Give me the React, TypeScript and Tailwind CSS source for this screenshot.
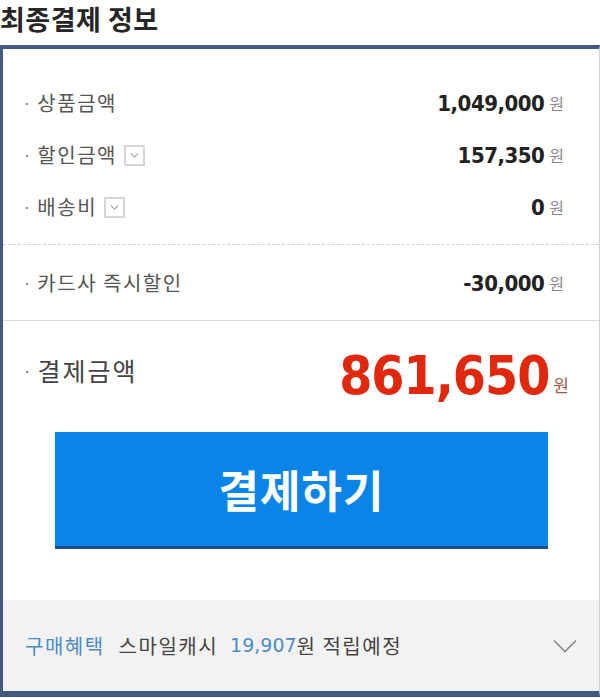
import { ChevronDown } from 'lucide-react'

const kr = "font-['Noto_Sans_CJK_KR','Noto_Sans',sans-serif]"
const num = "font-['DejaVu_Sans_Condensed','DejaVu_Sans','Noto_Sans_CJK_KR',sans-serif]"
const numWide = "font-['DejaVu_Sans','Noto_Sans_CJK_KR',sans-serif]"

type Row = { label: string; value: string; toggle?: boolean }

const topRows: Row[] = [
  { label: '상품금액', value: '1,049,000' },
  { label: '할인금액', value: '157,350', toggle: true },
  { label: '배송비', value: '0', toggle: true },
]

function ToggleBox() {
  return (
    <span className="ml-[7px] inline-flex h-[21px] w-[21px] items-center justify-center border-2 border-[#d6d6d6] bg-white">
      <ChevronDown className="h-[13px] w-[13px] text-[#a9a9a9]" strokeWidth={2.5} />
    </span>
  )
}

function PriceRow({ row }: { row: Row }) {
  return (
    <div className="flex h-[52px] items-center justify-between">
      <div className={`flex items-center text-[20px] tracking-[1.5px] text-[#555] ${kr}`}>
        <span className="mr-[5px] text-[14px] text-[#666]">·</span>
        <span>{row.label}</span>
        {row.toggle && <ToggleBox />}
      </div>
      <div className="flex items-center">
        <span className={`text-[22px] font-bold tracking-[-0.5px] text-[#222] ${num}`}>{row.value}</span>
        <span className={`ml-[5px] text-[16px] text-[#888] ${kr}`}>원</span>
      </div>
    </div>
  )
}

export default function App() {
  return (
    <div className="h-[698px] w-[600px] overflow-hidden bg-white">
      <h2 className={`h-[45px] text-[27px] font-bold leading-[37px] tracking-[0.5px] text-[#262626] ${kr}`}>최종결제 정보</h2>

      <div className="border-t-4 border-b-[6px] border-l-[3px] border-r border-t-[#43597f] border-b-[#43597f] border-l-[#43597f] border-r-[#cfd4dc]">
        <div className="border-b border-dashed border-[#cfcfcf] pb-[11px] pl-[20px] pr-[35px] pt-[28px]">
          {topRows.map((r) => (
            <PriceRow key={r.label} row={r} />
          ))}
        </div>

        <div className="border-b border-[#dcdcdc] pb-[11px] pl-[20px] pr-[35px] pt-[12px]">
          <PriceRow row={{ label: '카드사 즉시할인', value: '-30,000' }} />
        </div>

        <div className="pb-[51px] pt-[24px]">
          <div className="flex items-start justify-between pl-[20px] pr-[30px]">
            <div className={`mt-[7px] flex items-center text-[25px] tracking-[2px] text-[#444] ${kr}`}>
              <span className="mr-[4px] text-[15px] text-[#666]">·</span>
              <span>결제금액</span>
            </div>
            <div className="flex items-end">
              <span className={`text-[53px] font-bold leading-[62px] tracking-[-1px] text-[#e0280f] ${num}`}>861,650</span>
              <span className={`mb-[10px] ml-[4px] text-[17px] text-[#a0584a] ${kr}`}>원</span>
            </div>
          </div>

          <button
            type="button"
            className={`ml-[52px] mt-[25px] flex h-[117px] w-[493px] items-center justify-center border-b-[3px] border-[#1b4f93] bg-[#0b84e8] text-[44px] font-bold tracking-[1px] text-white ${kr}`}
          >
            결제하기
          </button>
        </div>

        <div className={`flex h-[91px] items-center justify-between bg-[#f2f2f2] pl-[22px] pr-[22px] text-[20px] tracking-[1.5px] ${kr}`}>
          <div className="flex items-center">
            <span className="text-[#4a8cc4]">구매혜택</span>
            <span className="ml-[14px] text-[#444]">스마일캐시</span>
            <span className={`ml-[12px] text-[19px] tracking-normal text-[#4a8cc4] ${numWide}`}>19,907</span>
            <span className="text-[#444]">원 적립예정</span>
          </div>
          <svg width="24" height="14" viewBox="0 0 24 14" fill="none">
            <path d="M1 1.5 L12 12.5 L23 1.5" stroke="#8a8a8a" strokeWidth="1.6" />
          </svg>
        </div>
      </div>
    </div>
  )
}
